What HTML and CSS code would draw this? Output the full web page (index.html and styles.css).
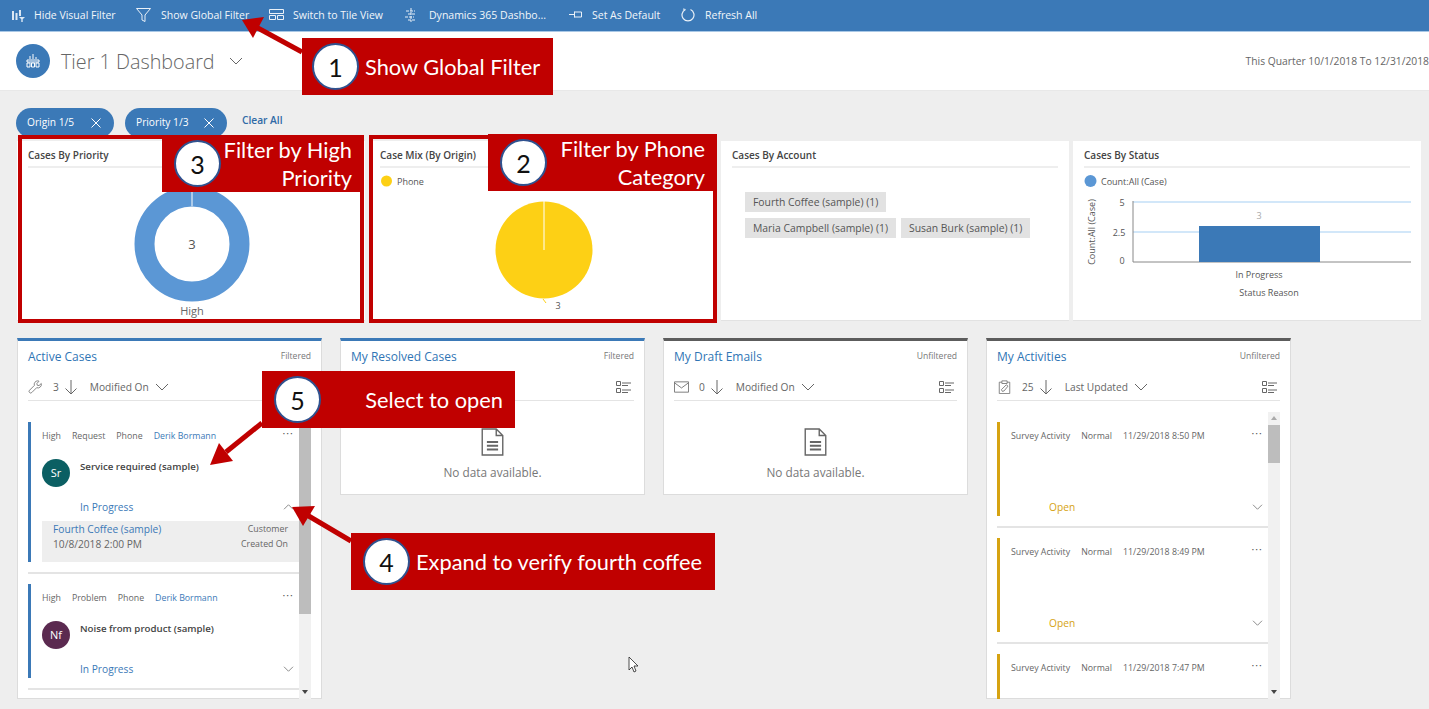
FILE: index.html
```html
<!DOCTYPE html>
<html lang="en">
<head>
    <meta charset="UTF-8">
    <title>Tier 1 Dashboard</title>
    <link rel="stylesheet" href="styles.css">
</head>
<body>
    <svg class="defs" width="0" height="0">
        <symbol id="i-chev" viewBox="0 0 14 8"><path d="M1 1l6 6 6-6" fill="none" stroke="currentColor"/></symbol>
        <symbol id="i-down" viewBox="0 0 14 16"><path d="M7 1v14M1.500 9.500L7 15l5.500-5.500" fill="none" stroke="currentColor"/></symbol>
        <symbol id="i-list" viewBox="0 0 16 13"><path d="M.5.500h4v4h-4zM.5 7.500h4v4h-4z" fill="none" stroke="currentColor"/><path d="M6 2h9M6 4.500h6M6 9h9M6 11.500h6" fill="none" stroke="currentColor"/></symbol>
        <symbol id="i-doc" viewBox="0 0 24 30"><path d="M1 1h15l7 7v21H1zM16 1v7h7" fill="#fff" stroke="#666" stroke-width="1.500"/><path d="M6 15h12M6 19h12M6 23h12" fill="none" stroke="#666" stroke-width="2"/></symbol>
        <symbol id="i-mail" viewBox="0 0 16 12"><path d="M.5.500h15v11H.5zM.5 1.500L8 7l7.500-5.500" fill="none" stroke="currentColor"/></symbol>
        <symbol id="i-wrench" viewBox="0 0 16 16"><path d="M10.500 1a4 4 0 0 0-3.800 5.200L1.200 11.700a1.800 1.800 0 0 0 2.600 2.600l5.500-5.500A4 4 0 0 0 14.600 4l-2.600 2.400-2-.4-.4-2 2.400-2.600a4 4 0 0 0-1.500-.4z" fill="none" stroke="currentColor"/></symbol>
        <symbol id="i-clip" viewBox="0 0 13 16"><path d="M3.500 2.500h-3v13h12v-13h-3M3.500 1h6v3h-6zM3 11l1 2 2-.5 4.500-5.500-2-1.500z" fill="none" stroke="currentColor"/></symbol>
    </svg>

    <div class="page">
        <div class="topbar">
            <span class="cmd cmd-visual">
                <svg class="cmd-icon" width="14" height="14" viewBox="0 0 14 14"><path d="M1 3h2v9H1zM4.500 5h2v7h-2zM8 2h2v6H8z" fill="#dce8f4"/><path d="M8 9h6l-2.300 2.300V14h-1.400v-2.700z" fill="#dce8f4"/></svg>
                Hide Visual Filter
            </span>
            <span class="cmd cmd-global">
                <svg class="cmd-icon" width="15" height="14" viewBox="0 0 15 14"><path d="M.5.500h14L9 7v6.500l-3-1.500V7z" fill="none" stroke="#eaf1f8"/></svg>
                Show Global Filter
            </span>
            <span class="cmd cmd-tile">
                <svg class="cmd-icon" width="15" height="11" viewBox="0 0 15 11"><path d="M.5.500h14v4H.5zM.5 6.500h6v4h-6zM8.500 6.500h6v4h-6z" fill="none" stroke="#eaf1f8"/></svg>
                Switch to Tile View
            </span>
            <span class="cmd cmd-dyn">
                <svg class="cmd-icon" width="12" height="14" viewBox="0 0 12 14"><path d="M6 0v14M1 3h9M3 6h8M0 9h9M3 12h7" fill="none" stroke="#eaf1f8" stroke-dasharray="3 1"/></svg>
                Dynamics 365 Dashbo...
            </span>
            <span class="cmd cmd-default">
                <svg class="cmd-icon" width="13" height="9" viewBox="0 0 13 9"><path d="M0 4.500h5M5.500 1.500v6M5.500 2h7v5h-7" fill="none" stroke="#eaf1f8"/></svg>
                Set As Default
            </span>
            <span class="cmd cmd-refresh">
                <svg class="cmd-icon" width="14" height="14" viewBox="0 0 14 14"><path d="M4.500 1.500a6 6 0 1 0 5 0M4.500 1.500L2 1" fill="none" stroke="#eaf1f8" stroke-width="1.200"/></svg>
                Refresh All
            </span>
        </div>

        <div class="head">
            <span class="head-badge">
                <svg width="14" height="14" viewBox="0 0 14 14"><path d="M7 0v5M4 2v3M10 3v2M1 6h12v2H1zM1 9h3v4H1zM5.500 9h3v4h-3zM10 9h3v4h-3z" fill="none" stroke="#fff"/></svg>
            </span>
            <h1 class="head-title">Tier 1 Dashboard</h1>
            <svg class="head-chev"><use href="#i-chev"/></svg>
            <span class="head-range">This Quarter 10/1/2018 To 12/31/2018</span>
        </div>

        <div class="filters">
            <span class="chip chip-origin">Origin 1/5 <svg class="chip-x" viewBox="0 0 10 10"><path d="M.5.500l9 9M9.500.500l-9 9" stroke="#fff" fill="none"/></svg></span>
            <span class="chip chip-priority">Priority 1/3 <svg class="chip-x" viewBox="0 0 10 10"><path d="M.5.500l9 9M9.500.500l-9 9" stroke="#fff" fill="none"/></svg></span>
            <a class="clear">Clear All</a>
        </div>

        <div class="charts">
            <div class="chart-card">
                <div class="chart-title">Cases By Priority</div>
                <svg class="chart-svg" viewBox="0 0 348 152">
                    <circle cx="175" cy="76" r="47.500" fill="none" stroke="#5b97d5" stroke-width="20"/>
                    <path d="M175 18v20" stroke="#fff"/>
                    <text x="175" y="81" class="t-num" text-anchor="middle">3</text>
                    <text x="175" y="147" class="t-axis" text-anchor="middle">High</text>
                </svg>
            </div>
            <div class="chart-card">
                <div class="chart-title">Case Mix (By Origin)</div>
                <svg class="chart-svg" viewBox="0 0 348 152">
                    <circle cx="17.500" cy="13" r="5.500" fill="#fdd015"/>
                    <text x="28" y="16.500" class="t-small">Phone</text>
                    <circle cx="175" cy="82" r="48.500" fill="#fdd015"/>
                    <path d="M175 33v49" stroke="#fff"/>
                    <path d="M174 131l3 4" stroke="#fdd015"/>
                    <text x="189" y="141" class="t-small" text-anchor="middle">3</text>
                </svg>
            </div>
            <div class="chart-card">
                <div class="chart-title">Cases By Account</div>
                <div class="tags">
                    <div class="tag-row"><span class="tag">Fourth Coffee (sample) (1)</span></div>
                    <div class="tag-row"><span class="tag">Maria Campbell (sample) (1)</span><span class="tag">Susan Burk (sample) (1)</span></div>
                </div>
            </div>
            <div class="chart-card">
                <div class="chart-title">Cases By Status</div>
                <svg class="chart-svg" viewBox="0 0 348 152">
                    <circle cx="17.500" cy="13" r="6" fill="#5b97d5"/>
                    <text x="28" y="16.500" class="t-small">Count:All (Case)</text>
                    <path d="M60 34h278M60 64h278" stroke="#c4dff8" stroke-width="1.500"/>
                    <path d="M60 33v61h278" fill="none" stroke="#888"/>
                    <rect x="126" y="58" width="121" height="36" fill="#3b79b7"/>
                    <text x="49" y="38" class="t-small" text-anchor="middle">5</text>
                    <text x="46" y="68" class="t-small" text-anchor="middle">2.5</text>
                    <text x="49" y="96" class="t-small" text-anchor="middle">0</text>
                    <text x="186" y="51" class="t-small t-faint" text-anchor="middle">3</text>
                    <text x="186" y="110" class="t-small" text-anchor="middle">In Progress</text>
                    <text x="196" y="128" class="t-small" text-anchor="middle">Status Reason</text>
                    <text class="t-small" text-anchor="middle" transform="translate(22 64) rotate(-90)">Count:All (Case)</text>
                </svg>
            </div>
        </div>

        <div class="lists">
            <section class="list list-tall">
                <div class="list-head"><h2>Active Cases</h2><span>Filtered</span></div>
                <div class="list-tools">
                    <svg class="tool-icon"><use href="#i-wrench"/></svg>
                    <span class="tool-count">3</span>
                    <svg class="tool-down"><use href="#i-down"/></svg>
                    <span class="tool-sort">Modified On</span>
                    <svg class="tool-chev"><use href="#i-chev"/></svg>
                </div>
                <div class="list-body">
                    <div class="items">
                        <div class="item">
                            <div class="item-meta"><span>High</span><span>Request</span><span>Phone</span><span class="link">Derik Bormann</span><i class="dots">&#8226;&#8226;&#8226;</i></div>
                            <div class="item-main"><span class="avatar avatar-sr">Sr</span><strong>Service required (sample)</strong></div>
                            <div class="item-status"><span>In Progress</span><svg class="item-chev item-chev-up"><use href="#i-chev"/></svg></div>
                            <div class="item-detail">
                                <div class="detail-row"><span class="link detail-big">Fourth Coffee (sample)</span><span>Customer</span></div>
                                <div class="detail-row"><span class="detail-big">10/8/2018 2:00 PM</span><span>Created On</span></div>
                            </div>
                        </div>
                        <div class="item">
                            <div class="item-meta"><span>High</span><span>Problem</span><span>Phone</span><span class="link">Derik Bormann</span><i class="dots">&#8226;&#8226;&#8226;</i></div>
                            <div class="item-main"><span class="avatar avatar-nf">Nf</span><strong>Noise from product (sample)</strong></div>
                            <div class="item-status"><span>In Progress</span><svg class="item-chev"><use href="#i-chev"/></svg></div>
                        </div>
                    </div>
                    <div class="scroll"><span class="scroll-up"></span><span class="thumb thumb-long"></span><span class="scroll-down"></span></div>
                </div>
            </section>

            <section class="list list-short">
                <div class="list-head"><h2>My Resolved Cases</h2><span>Filtered</span></div>
                <div class="list-tools">
                    <svg class="tool-list"><use href="#i-list"/></svg>
                </div>
                <div class="empty"><svg class="empty-icon"><use href="#i-doc"/></svg><span>No data available.</span></div>
            </section>

            <section class="list list-short list-dark">
                <div class="list-head"><h2>My Draft Emails</h2><span>Unfiltered</span></div>
                <div class="list-tools">
                    <svg class="tool-icon"><use href="#i-mail"/></svg>
                    <span class="tool-count">0</span>
                    <svg class="tool-down"><use href="#i-down"/></svg>
                    <span class="tool-sort">Modified On</span>
                    <svg class="tool-chev"><use href="#i-chev"/></svg>
                    <svg class="tool-list"><use href="#i-list"/></svg>
                </div>
                <div class="empty"><svg class="empty-icon"><use href="#i-doc"/></svg><span>No data available.</span></div>
            </section>

            <section class="list list-tall list-dark">
                <div class="list-head"><h2>My Activities</h2><span>Unfiltered</span></div>
                <div class="list-tools">
                    <svg class="tool-icon"><use href="#i-clip"/></svg>
                    <span class="tool-count">25</span>
                    <svg class="tool-down"><use href="#i-down"/></svg>
                    <span class="tool-sort">Last Updated</span>
                    <svg class="tool-chev"><use href="#i-chev"/></svg>
                    <svg class="tool-list"><use href="#i-list"/></svg>
                </div>
                <div class="list-body">
                    <div class="items">
                        <div class="item item-activity">
                            <div class="item-meta"><span>Survey Activity</span><span>Normal</span><span>11/29/2018 8:50 PM</span><i class="dots">&#8226;&#8226;&#8226;</i></div>
                            <div class="item-main"></div>
                            <div class="item-status"><span>Open</span><svg class="item-chev"><use href="#i-chev"/></svg></div>
                        </div>
                        <div class="item item-activity">
                            <div class="item-meta"><span>Survey Activity</span><span>Normal</span><span>11/29/2018 8:49 PM</span><i class="dots">&#8226;&#8226;&#8226;</i></div>
                            <div class="item-main"></div>
                            <div class="item-status"><span>Open</span><svg class="item-chev"><use href="#i-chev"/></svg></div>
                        </div>
                        <div class="item item-activity">
                            <div class="item-meta"><span>Survey Activity</span><span>Normal</span><span>11/29/2018 7:47 PM</span><i class="dots">&#8226;&#8226;&#8226;</i></div>
                        </div>
                    </div>
                    <div class="scroll"><span class="scroll-up"></span><span class="thumb"></span><span class="scroll-down"></span></div>
                </div>
            </section>
        </div>

        <!-- callouts drawn over the screen -->
        <div class="frame frame-a"></div>
        <div class="frame frame-b"></div>
        <svg class="arrows" width="1429" height="709" viewBox="0 0 1429 709">
            <path d="M302 52L256 27" stroke="#c00000" stroke-width="5"/>
            <path d="M242 20l22-3-11 21z" fill="#c00000"/>
            <path d="M262 423l-36 29" stroke="#c00000" stroke-width="5"/>
            <path d="M210 465l9-22 14 18z" fill="#c00000"/>
            <path d="M351 541l-44-26" stroke="#c00000" stroke-width="5"/>
            <path d="M292 507l23-1-12 20z" fill="#c00000"/>
            <path d="M629 657v13l3-3 2 5 2-1-2-5h4z" fill="#fff" stroke="#222" stroke-width=".8"/>
        </svg>
        <div class="note note-1"><span class="num">1</span><span class="note-text">Show Global Filter</span></div>
        <div class="note note-2"><span class="num">2</span><span class="note-text note-right">Filter by Phone<br>Category</span></div>
        <div class="note note-3"><span class="num">3</span><span class="note-text note-right">Filter by High<br>Priority</span></div>
        <div class="note note-4"><span class="num">4</span><span class="note-text">Expand to verify fourth coffee</span></div>
        <div class="note note-5"><span class="num">5</span><span class="note-text note-right">Select to open</span></div>
    </div>
</body>
</html>
```

FILE: styles.css
```css
*{
    margin: 0;
    padding: 0;
    box-sizing: border-box;
}
body{
    background: #eeeeee;
    font-family: "Open Sans", "Liberation Sans", sans-serif;
    color: #555;
    overflow: hidden;
}
.defs{
    position: absolute;
}
.page{
    position: relative;
    width: 1429px;
    height: 709px;
    overflow: hidden;
}

/* command bar */
.topbar{
    height: 32px;
    background: #3b79b7;
    border-bottom: 1px solid #a9c8e6;
    display: flex;
    align-items: center;
    padding-left: 11px;
    color: #f2f6fa;
    font-size: 10.5px;
    padding-bottom: 2px;
}
.cmd{
    display: flex;
    align-items: center;
    white-space: nowrap;
}
.cmd-icon{
    margin-right: 9px;
}
.cmd-visual{ width: 125px; }
.cmd-global{ width: 133px; }
.cmd-tile{ width: 136px; }
.cmd-dyn{ width: 164px; }
.cmd-default{ width: 112px; }
.cmd-dyn .cmd-icon{ margin-right: 12px; }
.cmd-default .cmd-icon{ margin-right: 10px; }
.cmd-refresh .cmd-icon{ margin-right: 10px; }
.cmd-global .cmd-icon{ margin-right: 10px; }

/* title */
.head{
    height: 59px;
    background: #fff;
    display: flex;
    align-items: center;
    padding-left: 16px;
    border-bottom: 1px solid #e8e8e8;
}
.head-badge{
    width: 34px;
    height: 34px;
    border-radius: 50%;
    background: #3b79b7;
    display: flex;
    align-items: center;
    justify-content: center;
}
.head-title{
    font-size: 19.8px;
    font-weight: 300;
    color: #666;
    margin-left: 11px;
    white-space: nowrap;
}
.head-chev{
    width: 14px;
    height: 8px;
    margin-left: 14px;
    color: #666;
}
.head-range{
    margin-left: auto;
    font-size: 10.3px;
    color: #666;
}

/* filter chips */
.filters{
    display: flex;
    align-items: flex-start;
    padding: 17px 0 0 16px;
    height: 50px;
}
.chip{
    height: 30px;
    border-radius: 15px;
    background: #3b79b7;
    color: #fff;
    font-size: 10.2px;
    display: flex;
    justify-content: space-between;
    padding: 7px 13px 0 11px;
}
.chip-origin{ width: 98px; }
.chip-priority{
    width: 102px;
    margin-left: 11px;
}
.chip-x{
    width: 10px;
    height: 10px;
    margin-top: 3px;
}
.clear{
    font-size: 10.2px;
    font-weight: 600;
    color: #2f6aa6;
    margin: 5px 0 0 15px;
}

/* chart row */
.charts{
    display: grid;
    grid-template-columns: repeat(4, 348px);
    gap: 4px;
    padding-left: 17px;
}
.chart-card{
    height: 180px;
    background: #fff;
    padding: 0 11px;
    border-bottom: 1px solid #e2e2e2;
}
.chart-title{
    height: 27px;
    border-bottom: 2px solid #eee;
    font-size: 10px;
    font-weight: 600;
    color: #444;
    line-height: 28px;
}
.chart-svg{
    display: block;
    width: 348px;
    height: 152px;
    margin-left: -11px;
}
.t-num{
    font-size: 13px;
    fill: #555;
}
.t-axis{
    font-size: 11px;
    fill: #666;
}
.t-small{
    font-size: 9px;
    fill: #555;
}
.t-faint{
    fill: #aaa;
}
.tags{
    padding: 24px 0 0 13px;
}
.tag-row{
    display: flex;
    gap: 5px;
    margin-bottom: 6px;
}
.tag{
    height: 20px;
    line-height: 20px;
    padding: 0 8px;
    background: #e2e2e2;
    font-size: 10.4px;
    color: #555;
    white-space: nowrap;
}

/* list row */
.lists{
    display: grid;
    grid-template-columns: repeat(4, 305px);
    gap: 18px;
    padding: 17px 0 0 17px;
    align-items: start;
}
.list{
    background: #fff;
    border: 1px solid #dcdcdc;
    border-top: 3px solid #3b79b7;
    padding: 0 10px;
}
.list-dark{
    border-top-color: #5c5c5c;
}
.list-tall{ height: 361px; }
.list-short{ height: 157px; }
.list-head{
    display: flex;
    justify-content: space-between;
    align-items: center;
    height: 30px;
}
.list-head h2{
    font-size: 12px;
    font-weight: 400;
    color: #2f75b5;
}
.list-head span{
    font-size: 8.6px;
    color: #777;
}
.list-tools{
    height: 30px;
    display: flex;
    align-items: center;
    border-bottom: 1px solid #e4e4e4;
    font-size: 10.2px;
    color: #666;
    padding-top: 3px;
}
.tool-icon{
    width: 15px;
    height: 14px;
    color: #777;
}
.tool-count{
    margin-left: 10px;
}
.tool-down{
    width: 14px;
    height: 16px;
    margin-left: 5px;
    color: #666;
}
.tool-sort{
    margin-left: 12px;
}
.tool-chev{
    width: 14px;
    height: 8px;
    margin-left: 6px;
    color: #666;
}
.tool-list{
    width: 16px;
    height: 13px;
    margin-left: auto;
    margin-right: 2px;
    color: #666;
}
.list-body{
    display: flex;
    height: 298px;
    padding-top: 11px;
    overflow: hidden;
}
.items{
    width: 271px;
    padding-top: 10px;
}
.item{
    border-left: 3px solid #3b79b7;
    height: 94px;
    padding: 6px 5px 0 11px;
    position: relative;
    margin-bottom: 22px;
}
.item:has(.item-detail){
    height: 140px;
}
.item::after{
    content: "";
    position: absolute;
    left: -3px;
    right: 0;
    height: 2px;
    background: #e4e4e4;
    bottom: -12px;
}
.item-activity{
    border-left-color: #d6a312;
}
.item-meta{
    display: flex;
    gap: 11px;
    height: 16px;
    align-items: center;
    font-size: 8.8px;
    color: #666;
    white-space: nowrap;
}
.link{
    color: #3b79b7;
}
.dots{
    margin-left: auto;
    font-style: normal;
    font-size: 6px;
    letter-spacing: 1.500px;
    margin-top: -5px;
    color: #555;
}
.item-main{
    display: flex;
    height: 28px;
    margin-top: 15px;
    font-size: 9.7px;
    color: #444;
}
.item-main strong{
    font-weight: 600;
    margin: 1px 0 0 10px;
    line-height: 14px;
}
.avatar{
    width: 28px;
    height: 28px;
    border-radius: 50%;
    color: #fff;
    font-size: 11px;
    text-align: center;
    line-height: 28px;
}
.avatar-sr{ background: #0b5f63; }
.avatar-nf{ background: #5b2a50; }
.item-status{
    display: flex;
    justify-content: space-between;
    align-items: center;
    height: 16px;
    margin-top: 12px;
    padding-left: 38px;
    font-size: 10.2px;
    color: #3b79b7;
}
.item-activity .item-status{
    color: #d6a312;
}
.item-chev{
    width: 11px;
    height: 6px;
    color: #666;
}
.item-chev-up{
    transform: scaleY(-1);
}
.item-detail{
    margin: 6px -5px 0 0;
    height: 41px;
    background: #eeeeee;
    padding: 0 11px;
    font-size: 8.8px;
    color: #666;
}
.detail-row{
    display: flex;
    justify-content: space-between;
    align-items: center;
    height: 15px;
}
.detail-big{
    font-size: 10.2px;
}
.scroll{
    width: 12px;
    background: #f1f1f1;
    display: flex;
    flex-direction: column;
    height: 287px;
}
.scroll-up,
.scroll-down{
    height: 13px;
    flex: none;
    position: relative;
}
.scroll-up::after,
.scroll-down::after{
    content: "";
    position: absolute;
    left: 3px;
    top: 4px;
    border-left: 3px solid transparent;
    border-right: 3px solid transparent;
}
.scroll-up::after{ border-bottom: 4px solid #aaa; }
.scroll-down::after{ border-top: 4px solid #444; }
.thumb{
    height: 38px;
    background: #bdbdbd;
    flex: none;
}
.thumb-long{
    height: 189px;
}
.scroll-down{
    margin-top: auto;
}
.empty{
    display: flex;
    flex-direction: column;
    align-items: center;
    padding-top: 27px;
    font-size: 11.8px;
    color: #777;
}
.empty-icon{
    width: 23px;
    height: 28px;
    margin-bottom: 8px;
}

/* red callouts */
.frame{
    position: absolute;
    top: 135px;
    height: 188px;
    border: 4px solid #c00000;
}
.frame-a{
    left: 18px;
    width: 346px;
}
.frame-b{
    left: 369px;
    width: 348px;
}
.arrows{
    position: absolute;
    left: 0;
    top: 0;
}
.note{
    position: absolute;
    height: 57px;
    background: #c00000;
    display: flex;
    align-items: center;
    color: #fff;
    font-family: Lato, "Open Sans", sans-serif;
    font-size: 21.8px;
    line-height: 28px;
}
.num{
    width: 47px;
    height: 47px;
    border-radius: 50%;
    background: #fff;
    border: 2px solid #2f528f;
    color: #111;
    font-size: 25px;
    display: flex;
    align-items: center;
    justify-content: center;
    flex: none;
    margin-left: 12px;
}
.note-text{
    margin-left: 6px;
    white-space: nowrap;
}
.note-right{
    margin-left: auto;
    text-align: right;
}
.note-1{ left: 302px; top: 38px; width: 251px; }
.note-1 .num{ margin-left: 10px; }
.note-2{ left: 488px; top: 134px; width: 229px; padding-right: 12px; }
.note-3{ left: 162px; top: 135px; width: 199px; padding-right: 9px; }
.note-4{ left: 351px; top: 533px; width: 364px; padding-right: 10px; }
.note-5{ left: 262px; top: 371px; width: 253px; padding-right: 12px; }
```
